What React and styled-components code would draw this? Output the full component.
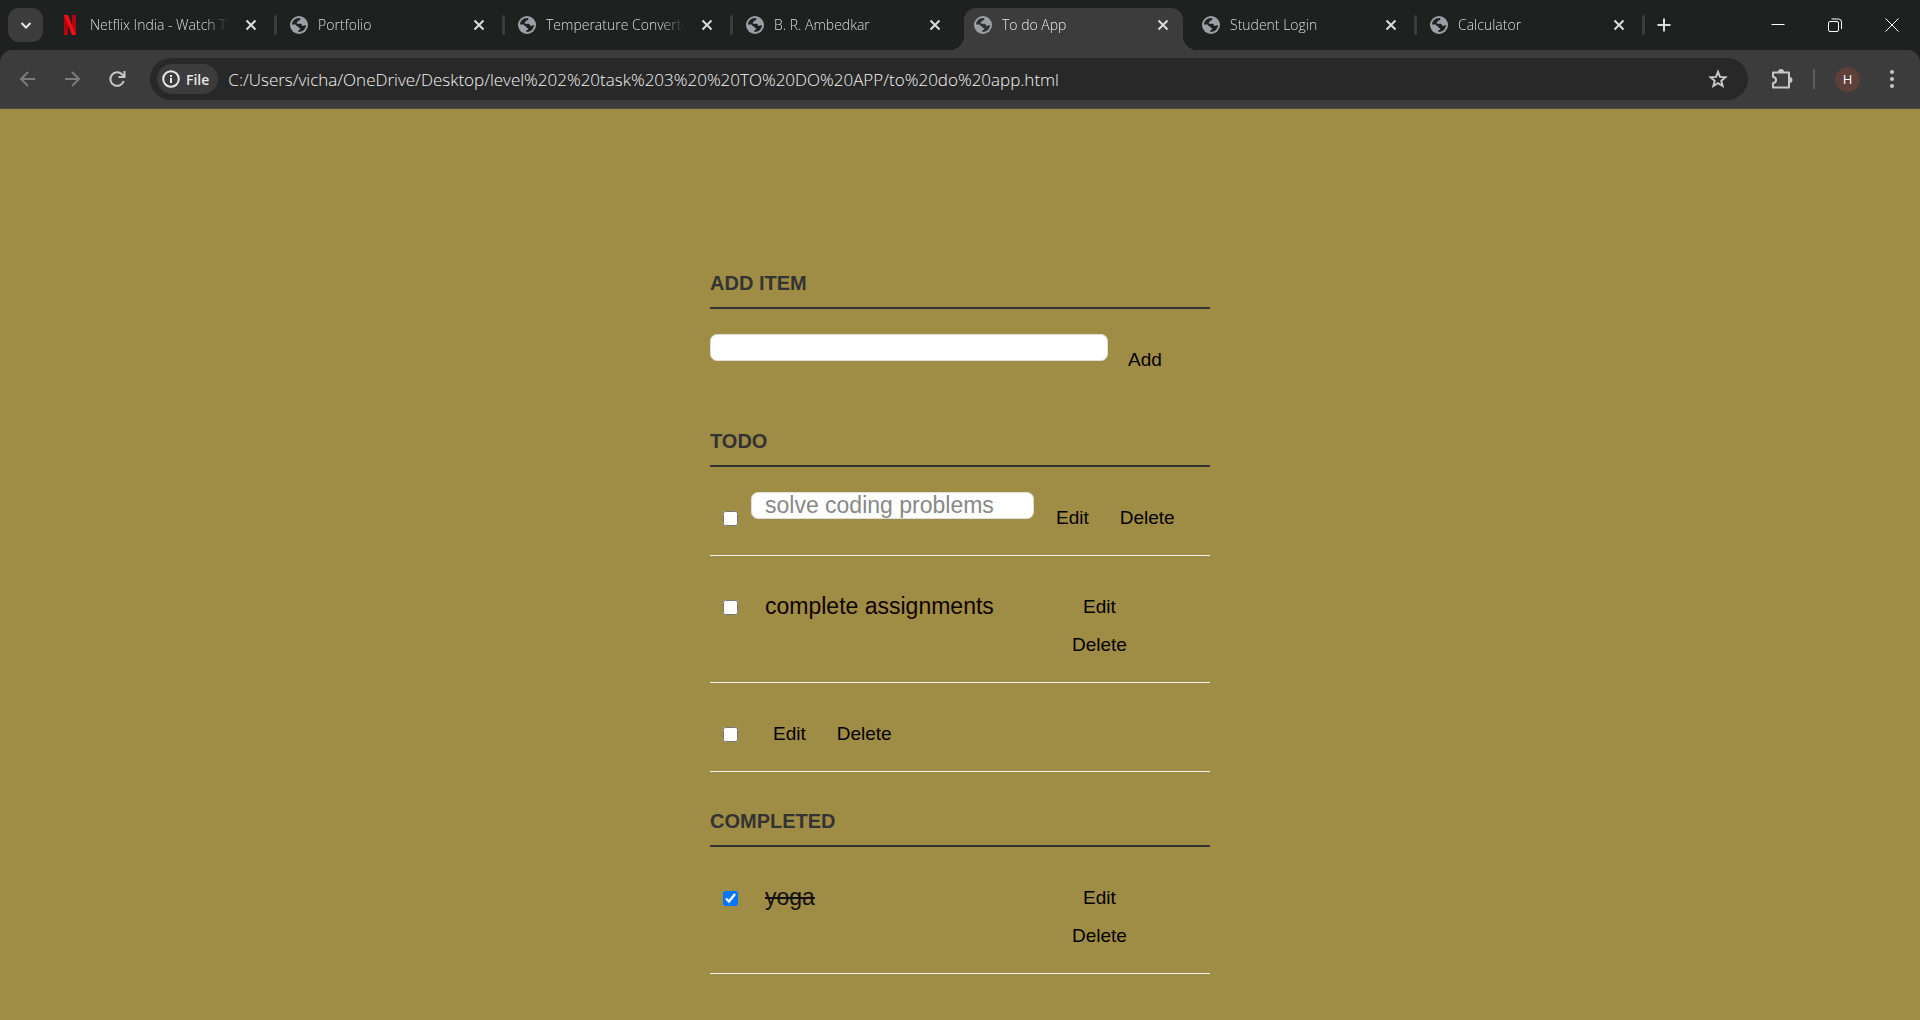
import React, { useState } from 'react';
import styled, { createGlobalStyle, css } from 'styled-components';

const GlobalStyle = createGlobalStyle`
  *, *::before, *::after { box-sizing: border-box; }
  html, body, #root { height: 100%; }
  body {
    margin: 0;
    font-family: 'Liberation Sans', Arial, sans-serif;
    background: #a08d45;
  }
  button, input { font: inherit; margin: 0; }
`;

const uiFont = "'Open Sans', 'Noto Sans', sans-serif";

const Window = styled.div`
  display: flex;
  flex-direction: column;
  min-height: 100%;
`;

const Chrome = styled.header`
  background: #1f2120;
  font-family: ${uiFont};
`;

const TabStrip = styled.div`
  display: flex;
  align-items: center;
  height: 50px;
  padding-left: 8px;
`;

const IconButton = styled.button`
  display: flex;
  align-items: center;
  justify-content: center;
  flex: none;
  width: ${(p) => p.$w || 20}px;
  height: ${(p) => p.$h || 20}px;
  padding: 0;
  border: 0;
  border-radius: ${(p) => p.$radius || 0}px;
  background: ${(p) => p.$bg || 'transparent'};
  color: ${(p) => p.$color || '#c7c7c7'};
`;

const Tabs = styled.nav`
  display: flex;
  height: 100%;
  margin-left: 9px;
`;

const Tab = styled.div`
  position: relative;
  display: flex;
  align-items: center;
  width: 219px;
  height: 42px;
  margin-top: 8px;
  padding: 0 10px 8px 10px;
  border-radius: 12px 12px 0 0;
  color: #dcdcdc;
  ${(p) =>
    p.$active &&
    css`
      background: #3c3c3c;
      color: #e8e8e8;
      &::before,
      &::after {
        content: '';
        position: absolute;
        bottom: 0;
        width: 14px;
        height: 14px;
      }
      &::before {
        right: 100%;
        background: radial-gradient(circle at 0 0, transparent 14px, #3c3c3c 14px);
      }
      &::after {
        left: 100%;
        background: radial-gradient(circle at 100% 0, transparent 14px, #3c3c3c 14px);
      }
    `}
`;

const TabTitle = styled.span`
  flex: 1;
  margin: 0 12px 0 10px;
  overflow: hidden;
  white-space: nowrap;
  font-size: 14px;
  line-height: 20px;
  font-weight: 300;
  mask-image: linear-gradient(to right, #000 calc(100% - 24px), transparent);
`;

const TabDivider = styled.span`
  width: 3px;
  height: 20px;
  margin: 15px 3px 0;
  border-radius: 2px;
  background: ${(p) => (p.$hidden ? 'transparent' : '#3c3c3c')};
`;

const NewTab = styled.div`
  margin-left: 6px;
  display: flex;
`;

const WindowControls = styled.div`
  display: flex;
  height: 100%;
  margin-left: auto;
`;

const Toolbar = styled.div`
  display: flex;
  align-items: center;
  height: 59px;
  padding: 0 18px;
  border-bottom: 1px solid #4d4a42;
  border-radius: 12px 12px 0 0;
  background: #3c3c3c;
`;

const NavButtons = styled.div`
  display: flex;
  gap: 25px;
  margin-right: 22px;
`;

const AddressBar = styled.form`
  display: flex;
  align-items: center;
  flex: 1;
  height: 42px;
  padding: 0 20px 0 7px;
  border-radius: 21px;
  background: #282828;
`;

const FileChip = styled.button`
  display: flex;
  align-items: center;
  gap: 6px;
  height: 30px;
  padding: 0 9px 0 5px;
  border: 0;
  border-radius: 15px;
  background: #3c3c3c;
  color: #e8e8e8;
  font-size: 14px;
  font-weight: 600;
`;

const Address = styled.input`
  flex: 1;
  min-width: 0;
  margin-left: 10px;
  padding: 0;
  border: 0;
  outline: 0;
  background: transparent;
  color: #f4f4f4;
  font-size: 17px;
  font-weight: 300;
`;

const Actions = styled.div`
  display: flex;
  align-items: center;
  margin-left: 23px;
`;

const ActionDivider = styled.span`
  width: 2px;
  height: 20px;
  margin: 0 20px;
  background: #5c5c5c;
`;

const Avatar = styled.button`
  width: 25px;
  height: 25px;
  margin-right: 22px;
  padding: 0;
  border: 0;
  border-radius: 50%;
  background: #5d4037;
  color: #fff;
  font-size: 13px;
  font-weight: 400;
`;

const Page = styled.main`
  flex: 1;
  padding: 125px 20px 0;
`;

const Container = styled.div`
  max-width: 500px;
  margin: 0 auto;
`;

const headingStyle = css`
  display: block;
  margin: 0;
  padding: 38px 0 12px;
  border-bottom: 2px solid #333;
  color: #333;
  font-size: 20px;
  font-weight: 700;
  line-height: 23px;
  text-transform: uppercase;
`;

const Heading = styled.h3`
  ${headingStyle}
`;

const AddLabel = styled.label`
  ${headingStyle}
`;

const AddRow = styled.form`
  display: flex;
  align-items: flex-start;
  gap: 8px;
  padding: 25px 0 20px;
`;

const TextBox = styled.input`
  flex: none;
  width: ${(p) => p.$width}px;
  height: 27px;
  padding: 0 13px;
  border: 1px solid #ddd;
  border-radius: 7px;
  outline: 0;
  background: #fff;
  color: #888;
  font-size: 23px;
`;

const List = styled.ul`
  margin: 0;
  padding: 0;
  list-style: none;
`;

const Item = styled.li`
  display: flex;
  align-items: flex-start;
  padding: 25px 0;
  border-bottom: 1px solid #eee;
`;

const Check = styled.input`
  flex: none;
  width: 15px;
  height: 15px;
  margin: 19px 13px 0;
`;

const TaskLabel = styled.label`
  flex: none;
  width: 299px;
  margin-top: 12px;
  padding-left: 14px;
  color: ${(p) => (p.$done ? '#111' : '#0f0202')};
  font-size: 23px;
  line-height: 26px;
  text-decoration: ${(p) => (p.$done ? 'line-through' : 'none')};
`;

const ItemButtons = styled.div`
  display: flex;
  flex-direction: ${(p) => (p.$stacked ? 'column' : 'row')};
  align-items: center;
  column-gap: 7px;
  margin-left: 10px;
`;

const TextButton = styled.button`
  height: 24px;
  margin-top: 14px;
  padding: 0 12px;
  border: 0;
  background: none;
  color: #000;
  font-size: 19px;
  line-height: 24px;
`;

const Globe = ({ ocean }) => (
  <svg width="18" height="18" viewBox="0 0 18 18" aria-hidden="true">
    <circle cx="9" cy="9" r="9" fill="#9aa0a6" />
    <path
      d="M2 8.400C2.300 5 5.200 2.100 9.300 2.100L10.300 2.400C10.600 3.800 9.800 4.500 8.300 4.600C8.300 5.600 7.600 6 6.900 6.100V7.800H10.600C11.600 7.800 12 8.500 12 9.800H13.500C14.300 9.800 14.500 9.200 16 9.100C16 12.800 13 15.900 9.100 16L8.300 15.800V14.300C9.800 14.200 10.300 13.400 10.200 12.300C8.600 12.200 8.200 11.500 8 10.300C6.500 10.300 6 9.600 5.800 8.500Z"
      fill={ocean}
    />
  </svg>
);

const Netflix = () => (
  <svg width="18" height="20" viewBox="0 0 18 20" aria-hidden="true">
    <path d="M2 0h4v20H2zM10 0h4v20h-4z" fill="#b1060f" />
    <path d="M2 0h4l8 20h-4z" fill="#f20d18" />
  </svg>
);

const Stroke = ({ size = 20, width = 2, children }) => (
  <svg
    width={size}
    height={size}
    viewBox={`0 0 ${size} ${size}`}
    fill="none"
    stroke="currentColor"
    strokeWidth={width}
    aria-hidden="true"
  >
    {children}
  </svg>
);

const tabs = [
  { title: 'Netflix India - Watch TV', icon: 'netflix' },
  { title: 'Portfolio' },
  { title: 'Temperature Converter' },
  { title: 'B. R. Ambedkar', beforeActive: true },
  { title: 'To do App', active: true },
  { title: 'Student Login' },
  { title: 'Calculator' },
];

const BrowserTab = ({ tab }) => (
  <>
    <Tab $active={tab.active}>
      {tab.icon === 'netflix' ? <Netflix /> : <Globe ocean={tab.active ? '#303131' : '#1f2120'} />}
      <TabTitle>{tab.title}</TabTitle>
      <IconButton aria-label={`Close ${tab.title}`} $color="#dcdcdc">
        <Stroke>
          <path d="M5.500 5.500l9 9M14.500 5.500l-9 9" />
        </Stroke>
      </IconButton>
    </Tab>
    <TabDivider $hidden={tab.active || tab.beforeActive} />
  </>
);

const Browser = () => (
  <Chrome>
    <TabStrip>
      <IconButton $w={35} $h={34} $radius={11} $bg="#3c3c3c" $color="#e8e8e8" aria-label="Search tabs">
        <Stroke>
          <path d="M5.500 8l4.500 4.500L14.500 8" />
        </Stroke>
      </IconButton>
      <Tabs>
        {tabs.map((tab) => (
          <BrowserTab key={tab.title} tab={tab} />
        ))}
      </Tabs>
      <NewTab>
        <IconButton aria-label="New tab" $color="#dcdcdc">
          <Stroke>
            <path d="M10 3.500v13M3.500 10h13" />
          </Stroke>
        </IconButton>
      </NewTab>
      <WindowControls>
        <IconButton $w={57} $h={50} $color="#fff" aria-label="Minimize">
          <Stroke width={1}>
            <path d="M3.500 9.500h13" />
          </Stroke>
        </IconButton>
        <IconButton $w={57} $h={50} $color="#fff" aria-label="Restore">
          <Stroke width={1}>
            <rect x="3.500" y="6.500" width="10" height="10" rx="1.500" />
            <path d="M6.500 4h7a3 3 0 0 1 3 3v7" />
          </Stroke>
        </IconButton>
        <IconButton $w={57} $h={50} $color="#fff" aria-label="Close window">
          <Stroke width={1}>
            <path d="M3.500 3.500l13 13M16.500 3.500l-13 13" />
          </Stroke>
        </IconButton>
      </WindowControls>
    </TabStrip>
    <Toolbar>
      <NavButtons>
        <IconButton $color="#7b7b7b" aria-label="Back">
          <Stroke>
            <path d="M17 10H3M10 3l-7 7 7 7" />
          </Stroke>
        </IconButton>
        <IconButton $color="#7b7b7b" aria-label="Forward">
          <Stroke>
            <path d="M2 10h14M9 3l7 7-7 7" />
          </Stroke>
        </IconButton>
        <IconButton aria-label="Reload">
          <Stroke>
            <path d="M15.700 12A6.800 6.800 0 1 1 14 5.200L16 7.200M16.500 2v6h-6" />
          </Stroke>
        </IconButton>
      </NavButtons>
      <AddressBar onSubmit={(e) => e.preventDefault()}>
        <FileChip type="button">
          <Stroke size={18}>
            <circle cx="9" cy="9" r="7.800" />
            <path d="M9 8v5M9 5v2" />
          </Stroke>
          File
        </FileChip>
        <Address
          aria-label="Address"
          defaultValue="C:/Users/vicha/OneDrive/Desktop/level%202%20task%203%20%20TO%20DO%20APP/to%20do%20app.html"
        />
        <IconButton type="button" aria-label="Bookmark this page">
          <Stroke>
            <path d="M10 3l2 4.900 5.400.4-4.100 3.500 1.300 5.200L10 14.200l-4.600 2.800 1.300-5.200-4.100-3.500 5.400-.4z" />
          </Stroke>
        </IconButton>
      </AddressBar>
      <Actions>
        <IconButton $w={22} $h={22} aria-label="Extensions">
          <Stroke size={22}>
            <path d="M2 4.500h16v15H2v-4.500a3 3 0 0 0 0-6z" strokeLinejoin="round" />
            <path d="M8 4a2 2 0 0 1 4 0zM18.500 10a2 2 0 0 1 0 4z" fill="currentColor" />
          </Stroke>
        </IconButton>
        <ActionDivider />
        <Avatar aria-label="Profile">H</Avatar>
        <IconButton aria-label="Menu">
          <svg width="20" height="20" fill="currentColor" aria-hidden="true">
            <circle cx="10" cy="3" r="2" />
            <circle cx="10" cy="10" r="2" />
            <circle cx="10" cy="17" r="2" />
          </svg>
        </IconButton>
      </Actions>
    </Toolbar>
  </Chrome>
);

const todo = [
  { id: 'coding', text: 'solve coding problems', editing: true },
  { id: 'assignments', text: 'complete assignments' },
  { id: 'blank', text: '' },
];

const completed = [{ id: 'yoga', text: 'yoga', done: true }];

const Task = ({ task }) => {
  const [checked, setChecked] = useState(Boolean(task.done));
  const [text, setText] = useState(task.text);
  return (
    <Item>
      <Check
        type="checkbox"
        id={task.id}
        aria-label={task.text || 'Task'}
        checked={checked}
        onChange={(e) => setChecked(e.target.checked)}
      />
      {task.editing && (
        <TextBox $width={283} aria-label="Edit task" value={text} onChange={(e) => setText(e.target.value)} />
      )}
      {!task.editing && task.text && (
        <TaskLabel htmlFor={task.id} $done={task.done}>
          {text}
        </TaskLabel>
      )}
      <ItemButtons $stacked={!task.editing && Boolean(task.text)}>
        <TextButton>Edit</TextButton>
        <TextButton>Delete</TextButton>
      </ItemButtons>
    </Item>
  );
};

export default function App() {
  return (
    <Window>
      <GlobalStyle />
      <Browser />
      <Page>
        <Container>
          <AddLabel htmlFor="new-task">Add Item</AddLabel>
          <AddRow onSubmit={(e) => e.preventDefault()}>
            <TextBox id="new-task" type="text" $width={398} />
            <TextButton>Add</TextButton>
          </AddRow>
          <Heading>Todo</Heading>
          <List>
            {todo.map((task) => (
              <Task key={task.id} task={task} />
            ))}
          </List>
          <Heading>Completed</Heading>
          <List>
            {completed.map((task) => (
              <Task key={task.id} task={task} />
            ))}
          </List>
        </Container>
      </Page>
    </Window>
  );
}
